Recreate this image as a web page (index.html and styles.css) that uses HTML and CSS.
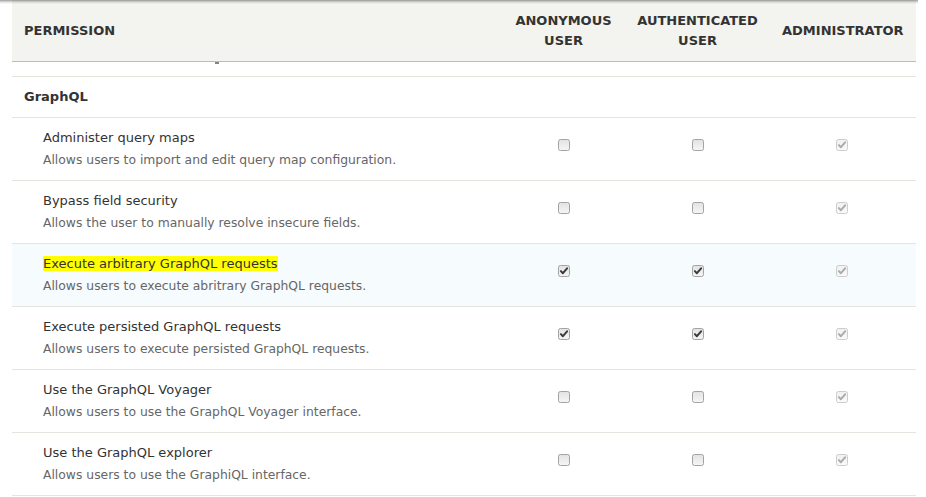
FILE: index.html
```html
<!DOCTYPE html>
<html lang="en">
<head>
<meta charset="utf-8">
<title>Permissions</title>
<link rel="stylesheet" href="styles.css">
</head>
<body>
<svg class="defs" width="0" height="0" aria-hidden="true">
  <defs>
    <linearGradient id="cbfill" x1="0" y1="0" x2="0" y2="1">
      <stop offset="0" stop-color="#e2e2e2"/>
      <stop offset="1" stop-color="#f6f6f6"/>
    </linearGradient>
    <linearGradient id="cbfilld" x1="0" y1="0" x2="0" y2="1">
      <stop offset="0" stop-color="#f0f0f0"/>
      <stop offset="1" stop-color="#fafafa"/>
    </linearGradient>
    <symbol id="cb-off" viewBox="0 0 12 12">
      <rect x="0.5" y="0.5" width="11" height="11" rx="2" fill="url(#cbfill)" stroke="#a3a3a3"/>
    </symbol>
    <symbol id="cb-on" viewBox="0 0 12 12">
      <rect x="0.5" y="0.5" width="11" height="11" rx="2" fill="url(#cbfill)" stroke="#a3a3a3"/>
      <path d="M2.9 6.1 L4.9 8.2 L9.1 3.3" fill="none" stroke="#3a3a3a" stroke-width="2" stroke-linecap="round" stroke-linejoin="round"/>
    </symbol>
    <symbol id="cb-dis" viewBox="0 0 12 12">
      <rect x="0.5" y="0.5" width="11" height="11" rx="2" fill="url(#cbfilld)" stroke="#cdcdcd"/>
      <path d="M2.9 6.1 L4.9 8.2 L9.1 3.3" fill="none" stroke="#ababab" stroke-width="2" stroke-linecap="round" stroke-linejoin="round"/>
    </symbol>
  </defs>
</svg>
<div class="topshadow"></div>
<table class="perm">
  <colgroup>
    <col class="c-perm">
    <col class="c-anon">
    <col class="c-auth">
    <col class="c-admin">
  </colgroup>
  <thead>
    <tr>
      <th class="h-perm">Permission</th>
      <th class="h-role">Anonymous<br>user</th>
      <th class="h-role">Authenticated<br>user</th>
      <th class="h-role h-admin">Administrator</th>
    </tr>
  </thead>
  <tbody>
    <tr class="partial">
      <td colspan="4"><span class="desc-tail"></span></td>
    </tr>
    <tr class="module">
      <td colspan="4">GraphQL</td>
    </tr>
    <tr>
      <td class="p"><div class="title">Administer query maps</div><div class="desc">Allows users to import and edit query map configuration.</div></td>
      <td class="cb"><svg class="box"><use href="#cb-off"/></svg></td>
      <td class="cb"><svg class="box"><use href="#cb-off"/></svg></td>
      <td class="cb admin"><svg class="box"><use href="#cb-dis"/></svg></td>
    </tr>
    <tr>
      <td class="p"><div class="title">Bypass field security</div><div class="desc">Allows the user to manually resolve insecure fields.</div></td>
      <td class="cb"><svg class="box"><use href="#cb-off"/></svg></td>
      <td class="cb"><svg class="box"><use href="#cb-off"/></svg></td>
      <td class="cb admin"><svg class="box"><use href="#cb-dis"/></svg></td>
    </tr>
    <tr class="hover">
      <td class="p"><div class="title"><mark>Execute arbitrary GraphQL requests</mark></div><div class="desc">Allows users to execute abritrary GraphQL requests.</div></td>
      <td class="cb"><svg class="box"><use href="#cb-on"/></svg></td>
      <td class="cb"><svg class="box"><use href="#cb-on"/></svg></td>
      <td class="cb admin"><svg class="box"><use href="#cb-dis"/></svg></td>
    </tr>
    <tr>
      <td class="p"><div class="title">Execute persisted GraphQL requests</div><div class="desc">Allows users to execute persisted GraphQL requests.</div></td>
      <td class="cb"><svg class="box"><use href="#cb-on"/></svg></td>
      <td class="cb"><svg class="box"><use href="#cb-on"/></svg></td>
      <td class="cb admin"><svg class="box"><use href="#cb-dis"/></svg></td>
    </tr>
    <tr>
      <td class="p"><div class="title">Use the GraphQL Voyager</div><div class="desc">Allows users to use the GraphQL Voyager interface.</div></td>
      <td class="cb"><svg class="box"><use href="#cb-off"/></svg></td>
      <td class="cb"><svg class="box"><use href="#cb-off"/></svg></td>
      <td class="cb admin"><svg class="box"><use href="#cb-dis"/></svg></td>
    </tr>
    <tr>
      <td class="p"><div class="title">Use the GraphQL explorer</div><div class="desc">Allows users to use the GraphiQL interface.</div></td>
      <td class="cb"><svg class="box"><use href="#cb-off"/></svg></td>
      <td class="cb"><svg class="box"><use href="#cb-off"/></svg></td>
      <td class="cb admin"><svg class="box"><use href="#cb-dis"/></svg></td>
    </tr>
  </tbody>
</table>
</body>
</html>
```
FILE: styles.css
```css
html, body {
  margin: 0;
  padding: 0;
  background: #ffffff;
}
body {
  font-family: "DejaVu Sans", "Liberation Sans", sans-serif;
  font-size: 13px;
  color: #333333;
  overflow: hidden;
}
.defs {
  position: absolute;
  width: 0;
  height: 0;
}
.topshadow {
  position: absolute;
  top: 0;
  left: 0;
  width: 918px;
  height: 4px;
  background: linear-gradient(to bottom, rgba(0,0,0,0.38), rgba(0,0,0,0.12) 50%, rgba(0,0,0,0));
  z-index: 2;
}
.perm {
  margin-left: 12px;
  width: 904px;
  border-collapse: collapse;
  table-layout: fixed;
}
.c-perm { width: 490px; }
.c-anon { width: 123px; }
.c-auth { width: 145px; }
.c-admin { width: 146px; }

thead th {
  background: #f3f3ef;
  border-bottom: 1px solid #bdbdb8;
  height: 61px;
  padding: 2px 12px 0;
  box-sizing: border-box;
  font-weight: bold;
  text-transform: uppercase;
  color: #333333;
  line-height: 20px;
  vertical-align: middle;
}
.h-perm { text-align: left; }
.h-role { text-align: center; }
.h-admin { padding: 2px 13px 0 12px; }

tbody td {
  border-bottom: 1px solid #e6e4df;
  padding: 0;
}
.partial td {
  height: 14px;
  vertical-align: top;
}
.desc-tail {
  display: block;
  width: 4px;
  height: 2px;
  margin-left: 203px;
  background: #666666;
  opacity: 0.8;
}
.module td {
  height: 40px;
  padding: 0 12px;
  font-weight: bold;
  vertical-align: middle;
  color: #333333;
}
td.p {
  padding: 9px 12px 9px 31px;
  vertical-align: top;
}
.title {
  line-height: 22px;
  color: #333333;
}
.desc {
  line-height: 22px;
  font-size: 12.35px;
  color: #666666;
}
mark {
  background: #ffff00;
  color: #333333;
  padding: 0;
}
td.cb {
  text-align: center;
  vertical-align: top;
  padding-top: 21px;
  padding-left: 1px;
}
td.admin {
  padding-right: 3px;
}
.box {
  width: 12px;
  height: 12px;
  display: inline-block;
  vertical-align: top;
}
tr.hover td {
  background: #f6fbfe;
}
```
